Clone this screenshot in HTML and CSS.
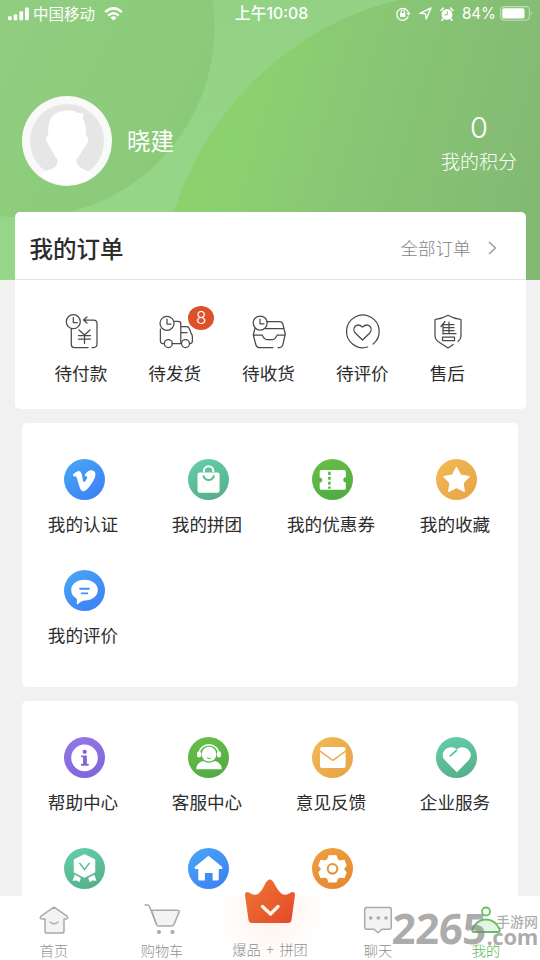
FILE: index.html
```html
<!DOCTYPE html>
<html lang="zh-CN">
<head>
<meta charset="utf-8">
<title>我的</title>
<link rel="stylesheet" href="styles.css">
</head>
<body>
<div class="app">
  <svg class="backdrop" viewBox="0 0 540 280" aria-hidden="true">
    <defs>
      <linearGradient id="base" x1="0" y1="0" x2="0" y2="1"><stop offset="0" stop-color="#93d284"/><stop offset="1" stop-color="#97d789"/></linearGradient>
      <linearGradient id="left" gradientUnits="userSpaceOnUse" x1="0" y1="20" x2="210" y2="120"><stop offset="0" stop-color="#91cd81"/><stop offset="1" stop-color="#89ca78"/></linearGradient>
      <linearGradient id="right" gradientUnits="userSpaceOnUse" x1="230" y1="110" x2="540" y2="200"><stop offset="0" stop-color="#8bd26f"/><stop offset=".45" stop-color="#88c575"/><stop offset="1" stop-color="#82b972"/></linearGradient>
    </defs>
    <path fill="url(#base)" d="M0 0h540v280H0z"/>
    <circle cx="24" cy="27" r="190.5" fill="url(#left)"/>
    <circle cx="474.5" cy="305" r="314.6" fill="url(#right)"/>
  </svg>

  <header class="status">
    <div class="status-side">
      <svg width="22" height="14" viewBox="0 0 22 14" fill="#fff"><rect y="9.3" width="3.7" height="4" rx="1"/><rect x="5.6" y="7.2" width="3.7" height="6.1" rx="1"/><rect x="11.4" y="4.3" width="3.7" height="9" rx="1"/><rect x="17" y=".5" width="3.9" height="12.8" rx="1"/></svg>
      <span class="carrier">中国移动</span>
      <svg width="19" height="14" viewBox="0 0 19 14" fill="none" stroke="#fff" stroke-width="2.5"><path d="M1.2 5.1q8.3-7.5 16.6 0M4.2 8.6q5.3-4.8 10.6 0"/><path d="M6.4 10.4q3.1-2.5 6.2 0L9.5 13.5z" fill="#fff" stroke="none"/></svg>
    </div>
    <div class="clock">上午10:08</div>
    <div class="status-side status-right">
      <svg width="15" height="14" viewBox="0 0 15 14" fill="none" stroke="#fff" stroke-width="1.3"><path d="M12.3 9.6A6 6 0 1 1 12.6 6"/><path d="M10.5 6.1h4l-2 2.7z" fill="#fff" stroke="none"/><rect x="4" y="6" width="5.4" height="4" fill="#fff" stroke="none"/><path d="M5 6V4.7a1.7 1.7 0 0 1 3.4 0V6" stroke-width="1.1"/></svg>
      <svg class="arrow" width="13" height="13" viewBox="0 0 13 13" fill="none" stroke="#fff" stroke-width="1.4" stroke-linejoin="round"><path d="M1 6.4 12 1 7.2 12 6.4 6.6z"/></svg>
      <svg width="14" height="14" viewBox="0 0 14 14"><circle cx="7" cy="7.4" r="5.4" fill="#fff"/><path d="M1 3.5 3.3 1M13 3.5 10.7 1M3 12l-1 1.3M11 12l1 1.3" stroke="#fff" stroke-width="1.6" stroke-linecap="round"/><path d="M7.3 4.4v3.4H4.6" fill="none" stroke="#87c576" stroke-width="1"/></svg>
      <span class="percent">84%</span>
      <svg width="32" height="15" viewBox="0 0 32 15"><rect x=".6" y=".6" width="28.8" height="13.6" rx="3.6" fill="none" stroke="#fff" stroke-opacity=".5" stroke-width="1.1"/><rect x="2.2" y="2.2" width="22.3" height="10.4" rx="1.7" fill="#fff"/><path d="M31.3 5.2q2 2.1 0 4.2z" fill="#fff" opacity=".5"/></svg>
    </div>
  </header>

  <section class="profile">
    <svg class="avatar" viewBox="0 0 90 90"><circle cx="45" cy="45" r="45" fill="#f9f9f9"/><circle cx="45" cy="45" r="37" fill="#e6e6e6"/><path fill="#fff" d="M22 75.500Q36 72 35.500 66V63Q33 61 30 55L25.500 47Q22 41 26.300 40Q24 16 43 14.800Q52 14 54.500 16.500L62 17.800L60.500 22.500Q65 29 63.700 40Q68 41 65.500 47L60 55Q57 61 54.500 63V66Q56 72 67 75.500L72 80Q45 97 18 80Z"/></svg>
    <h1 class="name">晓建</h1>
    <div class="points"><div class="points-value">0</div><div class="points-label">我的积分</div></div>
  </section>

  <section class="orders">
    <div class="orders-head">
      <h2 class="orders-title">我的订单</h2>
      <span class="orders-all">全部订单</span>
      <svg width="9" height="14" viewBox="0 0 9 14" fill="none" stroke="#999" stroke-width="1.4"><path d="m1 1 6.4 6L1 13"/></svg>
    </div>
    <div class="orders-list">
      <div class="order">
        <svg class="line" viewBox="0 0 40 40"><circle cx="12.3" cy="11.7" r="7"/><path d="M12.3 7.5v5h4M10.3 18.7V34.5q0 3 3 3H27M31 37.5h1.5q3.5 0 3.5-3.5V13.500q0-3.500-3.500-3.500H23M26 7l-3.500 3 3.500 3M18 20l5.500 5 5.500-5M17.500 25.500h12M17.500 29h12M23.500 25v8.500"/></svg>
        <span>待付款</span>
      </div>
      <div class="order">
        <svg class="line" viewBox="0 0 40 40"><circle cx="12" cy="13.300" r="7"/><path d="M12 9v5h4M5.400 19v12q0 2.500 2.500 2.500H9M17 33.500h8.800V14q0-2.700-2.700-2.700H19M26 16.500h5.500q2 0 2.700 2l2 5q1.200 1.500 1.200 3.500v4q0 2.500-2.500 2.500H34.500M26 22.500h6"/><circle cx="13.300" cy="33.500" r="4"/><circle cx="30.500" cy="33.500" r="4"/></svg>
        <span class="badge">8</span>
        <span>待发货</span>
      </div>
      <div class="order">
        <svg class="line" viewBox="0 0 40 40"><circle cx="12.200" cy="13" r="7"/><path d="M12 9v4.800h4M18.500 11.500H32q2 0 2.700 2L37.300 24 35 34q-.6 3.500-3.500 3.500H30M25 37.500H11Q8.500 37.500 7.800 34.500L5.300 25l1.700-7M17 18.500H36M5.300 25.200h9q2 4.300 4.500 4.300h6q2 0 4.300-4.300h8"/></svg>
        <span>待收货</span>
      </div>
      <div class="order">
        <svg class="line" viewBox="0 0 40 40"><path d="M31.200 34A16.300 16.300 0 1 0 25.600 37M20.500 30l-7-6.800c-4.200-4.300.5-11.500 7-6.100 6.500-5.400 11.200 1.800 7 6.100z"/></svg>
        <span>待评价</span>
      </div>
      <div class="order order-short">
        <svg class="line" viewBox="0 0 40 40"><path d="M31 31.500q3-2.500 3-5.500V9.500Q26.500 8.500 21 5.200 15.500 8.500 8 9.500V26q0 3 3 5.500l10 6.500 5.200-3.400"/><path d="M18 11.500l-4 5M16 14.500v9.500M16 14.500h11M16 17.500h11M16 20.500h11M16 23.500h13M22 12v11.500M15.500 27h12v3.700h-12z"/></svg>
        <span>售后</span>
      </div>
    </div>
  </section>

  <section class="panel panel-mine">
    <div class="cell">
      <svg class="disc blue" viewBox="0 0 40 40"><path d="M8.500 15.300q5-4.600 7.200-3.200c2.500 1.500 2.300 10.400 3.900 10.400 1.400 0 3.300-4 3-5.100-.4-1.500-1.800-.7-2.600-.3C21.500 12 25.500 10.500 28 11.200c3 .8 3.200 4 2 7-1.900 5-6.500 10.800-9.400 12.700-2.200 1.400-4.300 0-5.300-3L12.500 18.500q-.6-2.300-2.600-1.200z"/></svg>
      <span>我的认证</span>
    </div>
    <div class="cell">
      <svg class="disc teal" viewBox="0 0 40 40"><rect x="9.300" y="13.200" width="21.500" height="19.800" rx="2"/><path d="M15.500 13v-1.300a4.600 4.600 0 0 1 9.200 0V13" fill="none" stroke="#fff" stroke-width="2"/><path d="M15 16a5.200 5.200 0 0 0 10.300 0" fill="none" stroke="#57bd98" stroke-width="2"/></svg>
      <span>我的拼团</span>
    </div>
    <div class="cell">
      <svg class="disc green" viewBox="0 0 40 40"><path d="M9 10.800h22.500q1.500 0 1.500 1.500v5.500a2.500 2.500 0 0 0 0 5V28.500q0 1.500-1.500 1.500H9q-1.500 0-1.500-1.500V23a2.500 2.500 0 0 0 0-5V12.300q0-1.500 1.500-1.500z"/><path d="M17 12.500v16.500" stroke="#5ab545" stroke-width="2.500" stroke-dasharray="3 1.800"/></svg>
      <span>我的优惠券</span>
    </div>
    <div class="cell">
      <svg class="disc amber" viewBox="0 0 40 40"><path d="m20 8 4 7.600 8.500 1.500-6 6.100 1.200 8.500-7.700-3.800-7.700 3.800 1.200-8.500-6-6.100 8.500-1.500z" stroke="#fff" stroke-linejoin="round"/></svg>
      <span>我的收藏</span>
    </div>
    <div class="cell">
      <svg class="disc blue" viewBox="0 0 40 40"><path d="M20 9.500c7.500 0 13 4.200 13 10s-5.500 10.300-13 10.300c-1.500 0-3.500 1-6.700 3.600q-.8.500-.8-.8v-4.500C9 26 7 23.500 7 19.500c0-5.800 5.500-10 13-10z"/><path d="M15 18.300h10M16.500 22.800h7" stroke="#4192f3" stroke-width="1.800"/></svg>
      <span>我的评价</span>
    </div>
  </section>

  <section class="panel panel-service">
    <div class="cell">
      <svg class="disc purple" viewBox="0 0 40 40"><circle cx="20" cy="20.300" r="13"/><g fill="#8264db"><circle cx="20.200" cy="14.500" r="2.100"/><path d="M16.800 18h5.500v8.200h1.800v1.800h-7.500v-1.800h2v-6.400h-1.800z"/></g></svg>
      <span>帮助中心</span>
    </div>
    <div class="cell">
      <svg class="disc green" viewBox="0 0 40 40"><path d="M10.700 17a9.700 9.500 0 0 1 19.400 0" fill="none" stroke="#fff" stroke-width="1.400"/><rect x="8.800" y="14" width="4" height="6" rx="2"/><rect x="28.200" y="14" width="4" height="6" rx="2"/><circle cx="20.500" cy="16.800" r="7.200"/><path d="M8 31.500q.3-6.500 7-8 5.500 3 11 0 6.700 1.500 7 8z"/><path d="M18.500 20.300q2 1.300 4 0" fill="none" stroke="#5ab545"/></svg>
      <span>客服中心</span>
    </div>
    <div class="cell">
      <svg class="disc amber" viewBox="0 0 40 40"><rect x="7.800" y="9.800" width="25" height="20.500" rx="2"/><path d="m7.500 13.500 11.300 8.400q1.500 1 3 0l11.300-8.400" fill="none" stroke="#edb04e" stroke-width="1.600"/></svg>
      <span>意见反馈</span>
    </div>
    <div class="cell">
      <svg class="disc teal" viewBox="0 0 40 40"><path d="M20.300 34.500 8.800 22.800C3 16.500 9.300 9.500 15.800 10q3 .2 4.500 2.200 2-2.200 5-2.200c6 0 12 6.500 6.500 12.800z"/><path d="m13.500 19 7-6.500" stroke="#59be9a" stroke-width="1.600"/></svg>
      <span>企业服务</span>
    </div>
    <div class="cell">
      <svg class="disc teal" viewBox="0 0 40 40"><path d="M20 6.500 30 11.500v12L20 28.500 10 23.500v-12z" stroke="#fff" stroke-linejoin="round"/><path d="m10.500 26 6 3.300-1.700 4.200-2.300-1.800-4.200.3zM29.500 26l-6 3.300 1.700 4.200 2.300-1.800 4.200.3z"/><path d="m15 14.500 5 6.500 5-6.500" fill="none" stroke="#57bd98" stroke-width="1.500"/></svg>
    </div>
    <div class="cell">
      <svg class="disc blue" viewBox="0 0 40 40"><path d="m20 7.500 13.500 11q.5 2-1 2H30v10q0 1.300-1.300 1.300H24v-7.300h-7.500v7.300h-5.200q-1.300 0-1.300-1.300v-10H7.500q-1.500 0-1-2z"/></svg>
    </div>
    <div class="cell">
      <svg class="disc orange" viewBox="0 0 40 40"><path d="m16.500 7.500h7l1.300 3.800 2.700 1.500 3.800-.8 2 5-2.600 3.500 2.600 3.500-2 5-4-.8-2.500 1.500-1.300 3.500h-7l-1.300-3.500-2.500-1.500-4 .8-2-5 2.600-3.500-2.600-3.500 2-5 3.800.8 2.700-1.500z" stroke="#fff" stroke-linejoin="round"/><circle cx="20" cy="20.300" r="4.700" fill="none" stroke="#e99438" stroke-width="2"/></svg>
    </div>
  </section>

  <nav class="tabs">
    <div class="tab">
      <svg class="tab-icon" viewBox="0 0 32 32"><path fill="#f3f3f3" d="M16 3.200 29 12.200q1.800 2.700-1 2.700H26v12q0 2.100-2 2.100H9q-2 0-2-2.100v-12H4q-3 0-1-2.700z"/><path d="M12 18q4 3.600 8 0"/></svg>
      <span>首页</span>
    </div>
    <div class="tab">
      <svg class="tab-icon cart" viewBox="0 0 36 32"><path fill="#f3f3f3" d="M7.500 6.200h26q2.300 0 1.500 2.200l-4.700 11.200q-.8 2.400-3 2.400H15q-2 0-2.700-2z"/><path d="M1 1h2.500q1.500 0 2 1.400l6.800 17.600"/><circle cx="15" cy="28" r="1.300" fill="#aaa"/><circle cx="28.500" cy="28" r="1.300" fill="#aaa"/></svg>
      <span>购物车</span>
    </div>
    <div class="tab tab-main">
      <svg class="crown" viewBox="0 0 52 46"><defs><linearGradient id="crown" x1="0" y1="0" x2="1" y2="1"><stop stop-color="#ed7832"/><stop offset="1" stop-color="#e5482a"/></linearGradient></defs><path fill="url(#crown)" d="M1 16q0-4 4-2.500 5 3.500 9 1.500 4-3 7-10 5-9 9.500 0 3.500 7 7.500 10 4 2 9-1.500 4-1.500 4 2.500l-3.500 25q-.5 3-3.500 3H8q-3 0-3.500-3z"/><path d="m18.500 27.500 8 7.500 7.500-7.500" fill="none" stroke="#fff5ef" stroke-width="3.300" stroke-linecap="round" stroke-linejoin="round"/></svg>
      <span>爆品 + 拼团</span>
    </div>
    <div class="tab">
      <svg class="tab-icon" viewBox="0 0 32 32"><path fill="#f3f3f3" d="M5 3.500h22q2.300 0 2.300 2.300V23q0 2.300-2.300 2.300h-7L16 28.800l-4-3.500H5q-2.300 0-2.300-2.300V5.800q0-2.300 2.300-2.300z"/><g fill="#aaa" stroke="none"><circle cx="8.700" cy="14" r="1.800"/><circle cx="16.300" cy="14" r="1.800"/><circle cx="24" cy="14" r="1.800"/></g></svg>
      <span>聊天</span>
    </div>
    <div class="tab active">
      <svg class="tab-icon" viewBox="0 0 32 32"><circle cx="16" cy="7.500" r="4"/><path fill="#e6f5e3" d="M4 28q-2.500 0-1.500-3Q7 15.500 16 15.500T29.500 25q1 3-1.500 3z"/></svg>
      <span>我的</span>
    </div>
  </nav>
  <div class="watermark"><span class="mark-number">2265</span><span class="mark-site"><span>手游网</span><b>.com</b></span></div>
</div>
</body>
</html>
```
FILE: styles.css
```css
* { box-sizing: border-box; }
body {
  margin: 0;
  background: #f1f1f1;
  color: #2c2c2c;
  font-family: "Noto Sans CJK SC", sans-serif;
}
h1, h2 { margin: 0; }
svg { display: block; flex-shrink: 0; overflow: visible; }
.app {
  position: relative;
  width: 540px;
  height: 960px;
  overflow: hidden;
  display: flex;
  flex-direction: column;
}
.backdrop { position: absolute; z-index: -1; top: 0; left: 0; width: 540px; height: 280px; overflow: hidden; }

.status {
  height: 27px;
  flex-shrink: 0;
  padding: 0 8px;
  display: grid;
  grid-template-columns: 1fr auto 1fr;
  align-items: center;
  color: #fff;
}
.status-side { display: flex; align-items: center; height: 27px; }
.status-right { justify-content: flex-end; }
.carrier { font-size: 15.5px; line-height: 22px; margin: -2px 9px 0 3px; }
.clock { font-family: Inter, "Noto Sans CJK SC", sans-serif; font-size: 15.800px; font-weight: 500; line-height: 24px; padding-left: 3px; }
.arrow { margin: 0 8px 0 8px; }
.percent { font-family: Inter, sans-serif; font-size: 15.200px; margin: 0 4px 0 8px; }

.profile {
  height: 185px;
  flex-shrink: 0;
  display: flex;
  align-items: center;
  padding: 42px 23px 0 22px;
  color: #fff;
}
.avatar { width: 90px; height: 90px; }
.name { flex: 1; margin: -2px 0 0 15px; font-size: 23.500px; line-height: 34px; font-weight: 400; }
.points { margin-top: 4px; text-align: center; }
.points-value { font-family: Inter, sans-serif; font-size: 29px; line-height: 33px; font-weight: 300; }
.points-label { font-size: 19px; line-height: 28px; margin-top: 3px; font-weight: 300; }

.orders {
  width: 511px;
  height: 197px;
  flex-shrink: 0;
  margin: 0 auto;
  background: #fff;
  border-radius: 5px;
}
.orders-head {
  height: 68px;
  display: flex;
  align-items: center;
  padding: 4px 29px 0 15px;
  border-bottom: 1px solid #e4e4e4;
}
.orders-title { flex: 1; font-size: 23.500px; line-height: 34px; font-weight: 500; }
.orders-all { font-size: 17.500px; color: #858585; font-weight: 300; margin-right: 17px; }
.orders-list { display: flex; gap: 41px; padding: 30px 0 0 40px; }
.order { position: relative; width: 52.800px; display: flex; flex-direction: column; align-items: center; font-size: 17.600px; line-height: 26px; white-space: nowrap; }
.order-short { width: 35.200px; }
.order > span:last-child { margin-top: 10px; }
.line { width: 40px; height: 40px; fill: none; stroke: #4a4a4a; stroke-width: 1.250; stroke-linecap: round; stroke-linejoin: round; }
.badge {
  position: absolute;
  left: 40px;
  top: -4px;
  width: 26px;
  height: 24px;
  border-radius: 50%;
  background: #dd502a;
  color: #fff;
  font: 300 17px/24px Inter, sans-serif;
  text-align: center;
}

.panel {
  width: 496px;
  flex-shrink: 0;
  margin: 14px auto 0;
  padding-top: 36px;
  background: #fff;
  border-radius: 5px;
  display: grid;
  grid-template-columns: repeat(4, 124px);
  grid-auto-rows: 110.500px;
  align-content: start;
}
.panel-mine { height: 264px; }
.panel-service { height: 195px; border-radius: 5px 5px 0 0; overflow: hidden; }
.cell { display: flex; flex-direction: column; align-items: center; font-size: 17.600px; line-height: 26px; white-space: nowrap; }
.cell span { margin-top: 11px; margin-right: 2px; }
.disc { width: 41px; height: 41px; border-radius: 50%; fill: #fff; }
.blue { background: linear-gradient(145deg, #48a9f4, #3c7cf5); }
.teal { background: linear-gradient(160deg, #64cfac, #54ad85); }
.green { background: linear-gradient(160deg, #6cbf48, #4caa42); }
.amber { background: linear-gradient(135deg, #f2bb55, #e7a246); }
.purple { background: linear-gradient(160deg, #9478e8, #8063d8); }
.orange { background: linear-gradient(160deg, #f09f3e, #e48732); }

.tabs {
  height: 64px;
  flex-shrink: 0;
  display: grid;
  grid-template-columns: repeat(5, 108px);
  background: radial-gradient(circle at 270px 14px, #fff1ea 0, #fff 54px);
}
.tab { display: flex; flex-direction: column; align-items: center; padding-top: 8px; font-size: 14.200px; line-height: 20px; font-weight: 300; color: #909090; }
.tab span { margin-top: 4px; }
.tab-icon { width: 32px; height: 32px; fill: none; stroke: #aaa; stroke-width: 1.500; stroke-linecap: round; stroke-linejoin: round; }
.cart { width: 36px; }
.tab-main { padding-top: 0; word-spacing: 2.500px; }
.crown { width: 52px; height: 46px; margin-top: -17px; }
.tab .crown + span { margin-top: 14px; }
.tab.active { color: #58b854; }
.active .tab-icon { stroke: #68bd64; stroke-width: 1.800; }

.watermark {
  position: absolute;
  left: 392px;
  top: 908px;
  display: flex;
  color: rgba(130, 130, 130, .66);
  white-space: nowrap;
}
.mark-number { width: 95px; font: bold 42px/40px "Open Sans", sans-serif; letter-spacing: -.500px; transform: skewX(-3deg); }
.mark-site { width: 51px; display: flex; flex-direction: column; align-items: flex-end; font-size: 14px; line-height: 16px; font-weight: 500; padding-top: 5px; }
.mark-site b { font: bold 22px/14px "Open Sans", sans-serif; letter-spacing: -.300px; }
```
